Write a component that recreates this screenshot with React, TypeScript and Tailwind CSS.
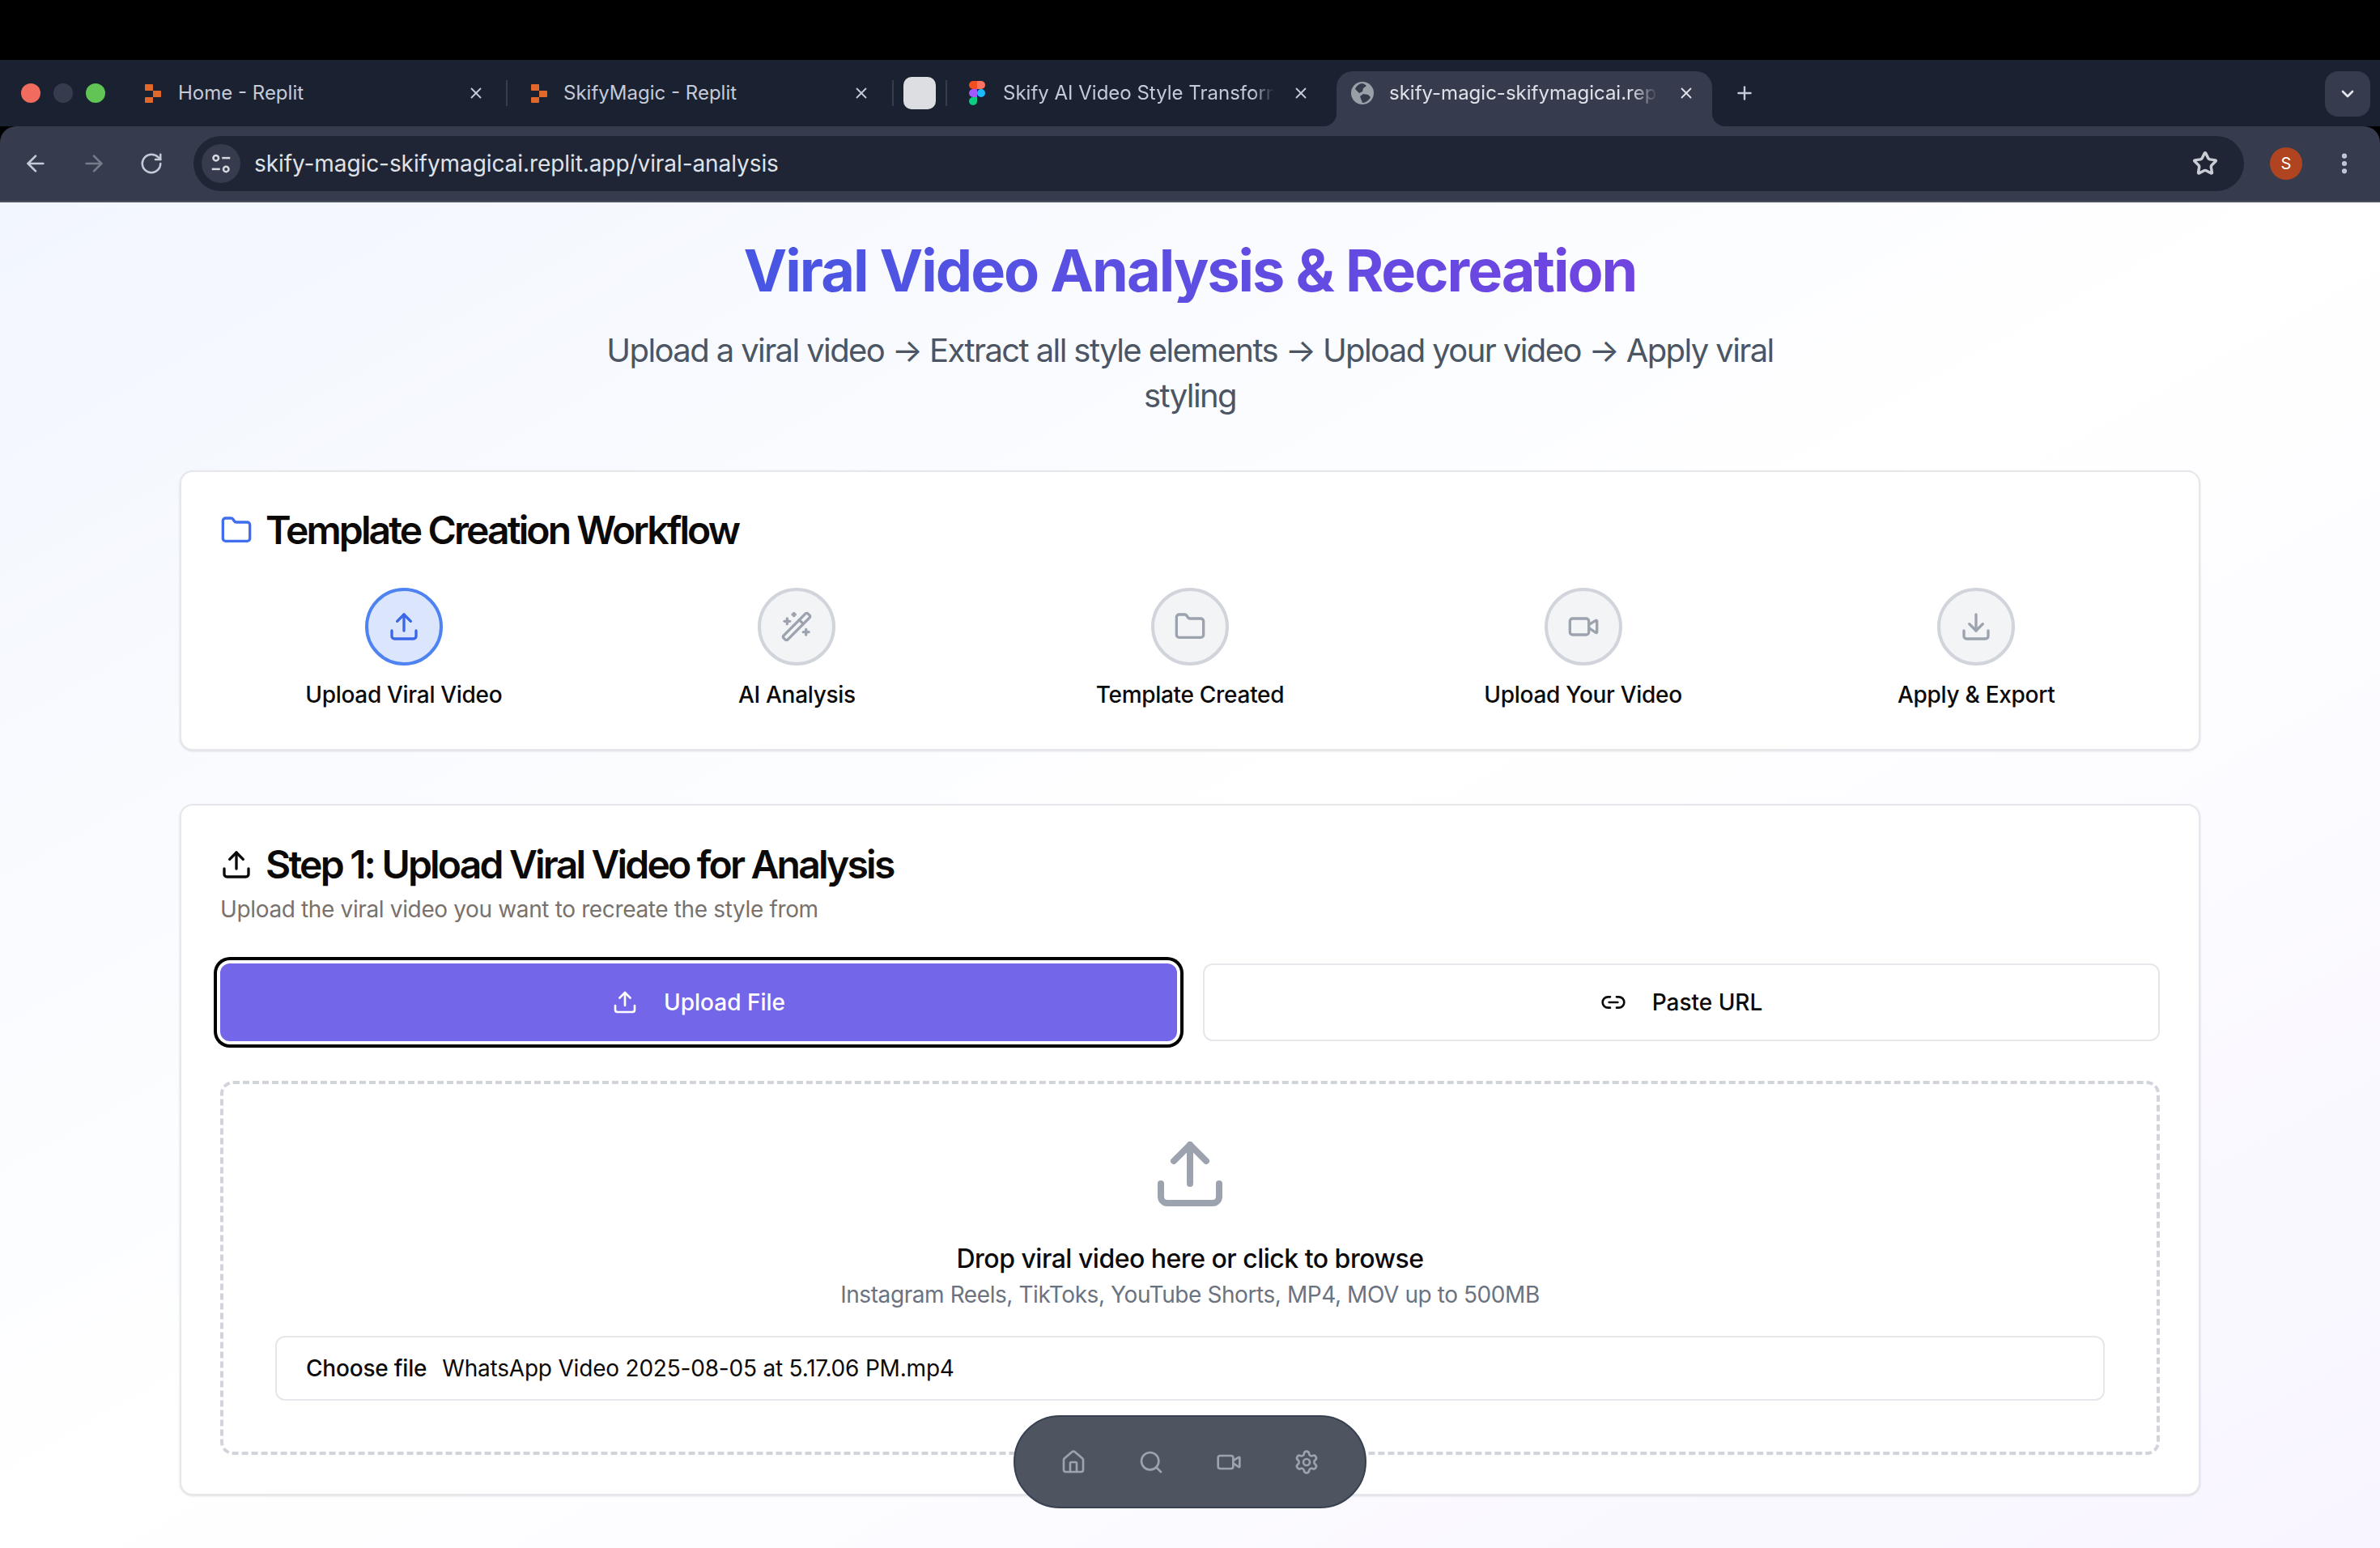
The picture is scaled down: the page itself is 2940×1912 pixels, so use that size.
import React from "react";
import { ArrowLeft, ArrowRight, RotateCw, Star, EllipsisVertical, ChevronDown, Plus, X, Folder, Upload, WandSparkles, Video, Download, Link2, House, Search, Settings } from "lucide-react";

const ReplitLogo = () => (
  <svg viewBox="0 0 20 23" className="w-[20px] h-[23px] shrink-0">
    <path d="M0 1a1 1 0 0 1 1-1h8a1 1 0 0 1 1 1v7H1a1 1 0 0 1-1-1Z" fill="#e2682a" />
    <path d="M10 8h9a1 1 0 0 1 1 1v6a1 1 0 0 1-1 1h-9Z" fill="#e2682a" />
    <path d="M1 16h9v6a1 1 0 0 1-1 1H1a1 1 0 0 1-1-1v-5a1 1 0 0 1 1-1Z" fill="#e2682a" />
  </svg>
);

const FigmaLogo = () => (
  <svg viewBox="0 0 20 30" className="w-[20px] h-[30px] shrink-0">
    <path d="M0 5a5 5 0 0 1 5-5h5v10H5a5 5 0 0 1-5-5Z" fill="#f24e1e" />
    <path d="M10 0h5a5 5 0 0 1 0 10h-5Z" fill="#ff7262" />
    <path d="M0 15a5 5 0 0 1 5-5h5v10H5a5 5 0 0 1-5-5Z" fill="#a259ff" />
    <circle cx="15" cy="15" r="5" fill="#1abcfe" />
    <path d="M0 25a5 5 0 0 1 5-5h5v5a5 5 0 0 1-10 0Z" fill="#0acf83" />
  </svg>
);

const GlobeIcon = () => (
  <svg viewBox="0 0 28 28" className="w-[28px] h-[28px] shrink-0">
    <circle cx="14" cy="14" r="14" fill="#9aa0a8" />
    <path d="M13 2c-4 1-7 4-8 7l5 5 4-2 1-4 4-3c-2-2-4-3-6-3ZM15 15l-4 3 3 8c4 0 8-3 10-7l-3-3Z" fill="#353b4b" />
  </svg>
);

const TuneIcon = () => (
  <svg viewBox="0 0 24 24" className="w-[30px] h-[30px]" fill="none" stroke="#d5d8df" strokeWidth="2">
    <circle cx="7" cy="6.5" r="2.6" />
    <path d="M13 6.5h8" />
    <path d="M3 17.5h8" />
    <circle cx="17" cy="17.5" r="2.6" />
  </svg>
);

function Tab({ width, icon, title, fade, closeGap, textGap }: { width: string; icon: React.ReactNode; title: string; fade?: boolean; closeGap: string; textGap: string }) {
  return (
    <div className={`flex items-center h-[54px] shrink-0 ${width}`}>
      {icon}
      <span className={`flex-1 min-w-0 overflow-hidden whitespace-nowrap text-[24px] text-[#c5cad8] ${textGap} ${fade ? "[mask-image:linear-gradient(to_right,black_92%,transparent)]" : ""}`}>{title}</span>
      <X className={`w-[22px] h-[22px] text-[#c5cad8] shrink-0 ${closeGap}`} strokeWidth={2} />
    </div>
  );
}

const Sep = () => <div className="w-[2px] h-[32px] bg-[#363c4d] shrink-0" />;

const steps = [
  { label: "Upload Viral Video", Icon: Upload, active: true },
  { label: "AI Analysis", Icon: WandSparkles },
  { label: "Template Created", Icon: Folder },
  { label: "Upload Your Video", Icon: Video },
  { label: "Apply & Export", Icon: Download },
];

export default function App() {
  return (
    <div className="relative w-[2940px] h-[1912px] overflow-hidden flex flex-col bg-black font-['Inter',sans-serif]">
      <div className="h-[74px] bg-black shrink-0" />
      <div className="h-[82px] bg-[#1a2130] shrink-0 flex pl-[26px] items-start pt-[14px]">
        <div className="flex gap-4 items-center h-[54px] shrink-0">
          <div className="w-[24px] h-[24px] rounded-full bg-[#f26b5f]" />
          <div className="w-[24px] h-[24px] rounded-full bg-[#363c4d]" />
          <div className="w-[24px] h-[24px] rounded-full bg-[#60c554]" />
        </div>
        <div className="ml-[49px] flex items-center h-[54px]">
          <Tab width="w-[446px]" icon={<ReplitLogo />} title="Home - Replit" textGap="ml-[21px]" closeGap="mr-[26px]" />
          <Sep />
          <div className="w-[29px]" />
          <Tab width="w-[446px]" icon={<ReplitLogo />} title="SkifyMagic - Replit" textGap="ml-[20px]" closeGap="mr-[27px]" />
          <Sep />
          <div className="w-[12px]" />
          <div className="w-[40px] h-[40px] rounded-[10px] bg-[#dcdee2] shrink-0" />
          <div className="w-[12px]" />
          <Sep />
          <div className="w-[27px]" />
          <Tab width="w-[454px]" icon={<FigmaLogo />} title="Skify AI Video Style Transformer" fade textGap="ml-[22px]" closeGap="ml-[22px] mr-[33px]" />
        </div>
        <div className="relative h-[68px] w-[464px] shrink-0 rounded-t-[20px] bg-[#363c4d] flex items-start pl-[18px] pr-[21px]">
          <div className="absolute -left-[16px] bottom-0 w-[16px] h-[16px] bg-[#363c4d]"><div className="w-full h-full bg-[#1a2130] rounded-br-[16px]" /></div>
          <div className="absolute -right-[16px] bottom-0 w-[16px] h-[16px] bg-[#363c4d]"><div className="w-full h-full bg-[#1a2130] rounded-bl-[16px]" /></div>
          <div className="flex items-center h-[54px] w-full">
            <GlobeIcon />
            <span className="ml-[19px] flex-1 min-w-0 overflow-hidden whitespace-nowrap text-[24px] text-[#dfe2e8] [mask-image:linear-gradient(to_right,black_90%,transparent)]">skify-magic-skifymagicai.replit.app</span>
            <X className="ml-[24px] w-[22px] h-[22px] text-[#dfe2e8] shrink-0" strokeWidth={2} />
          </div>
        </div>
        <Plus className="ml-[27px] mt-[14px] w-[26px] h-[26px] text-[#c5cad8] shrink-0" strokeWidth={2.2} />
        <div className="flex-1" />
        <div className="mr-[12px] w-[56px] h-[56px] rounded-[16px] bg-[#363c4d] flex items-center justify-center shrink-0">
          <ChevronDown className="w-[24px] h-[24px] text-[#e5e7ec]" strokeWidth={2.6} />
        </div>
      </div>
      <div className="h-[94px] shrink-0 bg-[#363c4d] rounded-t-[20px] border-b-2 border-[#4a4f5c] flex items-center">
        <ArrowLeft className="ml-[28px] w-[32px] h-[32px] text-[#c5cad8] shrink-0" strokeWidth={2} />
        <ArrowRight className="ml-[40px] w-[32px] h-[32px] text-[#757b8a] shrink-0" strokeWidth={2} />
        <RotateCw className="ml-[40px] w-[30px] h-[30px] text-[#c5cad8] shrink-0" strokeWidth={2} />
        <div className="ml-[37px] h-[68px] flex-1 rounded-full bg-[#1f2534] flex items-center pl-[10px] pr-[32px]">
          <div className="w-[48px] h-[48px] rounded-full bg-[#363c4d] flex items-center justify-center shrink-0"><TuneIcon /></div>
          <span className="ml-[17px] flex-1 text-[28px] tracking-[-0.08px] text-[#dfe2e8] whitespace-nowrap">skify-magic-skifymagicai.replit.app/viral-analysis</span>
          <Star className="w-[32px] h-[32px] text-[#c9ccd3] shrink-0" strokeWidth={2.6} />
        </div>
        <div className="ml-[32px] w-[40px] h-[40px] rounded-full bg-[#b04420] flex items-center justify-center text-[20px] text-white shrink-0">S</div>
        <EllipsisVertical className="ml-[36px] mr-[28px] w-[32px] h-[32px] text-[#c5cad8] shrink-0" strokeWidth={2.6} />
      </div>

      <div className="flex-1 min-h-0 bg-gradient-to-br from-[#f2f6fe] via-white to-[#f8f5ff]">
        <div className="w-[2496px] mx-auto">
          <div className="pt-[44px] flex flex-col items-center">
            <h1 className="text-[72px] leading-[80px] font-bold tracking-[-2px] bg-gradient-to-r from-[#4756e3] to-[#7044e0] bg-clip-text text-transparent">Viral Video Analysis &amp; Recreation</h1>
            <p className="mt-[31px] w-[1536px] text-center text-[40px] leading-[56px] tracking-[-1.6px] text-[#4b5563]">Upload a viral video → Extract all style elements → Upload your video → Apply viral styling</p>
          </div>

          <section className="mt-[64px] h-[346px] rounded-[16px] border-2 border-[#e5e7eb] bg-white shadow-sm px-[48px] pt-[40px]">
            <div className="flex items-center gap-[16px] h-[64px]">
              <Folder className="w-[40px] h-[40px] text-[#3f6fee] shrink-0" strokeWidth={2} />
              <h2 className="text-[48px] leading-[64px] font-semibold tracking-[-2.9px] text-[#0c0a09]">Template Creation Workflow</h2>
            </div>
            <div className="mt-[39px] grid grid-cols-5 gap-8">
              {steps.map(({ label, Icon, active }) => (
                <div key={label} className="flex flex-col items-center">
                  <div className={`w-[96px] h-[96px] rounded-full border-4 flex items-center justify-center ${active ? "border-[#4f83f1] bg-[#dbe6fd] text-[#3a67e8]" : "border-[#d1d5db] bg-[#f3f4f6] text-[#9ca3af]"}`}>
                    <Icon className="w-[40px] h-[40px]" strokeWidth={2} />
                  </div>
                  <div className="mt-[16px] text-[28px] leading-[40px] font-medium tracking-[-0.3px] text-[#0c0a09]">{label}</div>
                </div>
              ))}
            </div>
          </section>

          <section className="mt-[66px] h-[854px] rounded-[16px] border-2 border-[#e5e7eb] bg-white shadow-sm px-[48px] pt-[41px]">
            <div className="flex items-center gap-[16px] h-[64px]">
              <Upload className="w-[40px] h-[40px] text-[#0c0a09] shrink-0" strokeWidth={2} />
              <h2 className="text-[48px] leading-[64px] font-semibold tracking-[-2.8px] text-[#0c0a09]">Step 1: Upload Viral Video for Analysis</h2>
            </div>
            <p className="mt-[3px] text-[28px] leading-[40px] tracking-[-0.36px] text-[#78716c]">Upload the viral video you want to recreate the style from</p>
            <div className="mt-[47px] grid grid-cols-2 gap-8">
              <div className="h-[96px] rounded-[12px] bg-[#7366e9] ring-4 ring-black ring-offset-4 ring-offset-white flex items-center justify-center gap-[32px] text-white text-[28px] font-medium">
                <Upload className="w-[32px] h-[32px]" strokeWidth={2} />
                Upload File
              </div>
              <div className="h-[96px] rounded-[12px] border-2 border-[#e5e7eb] bg-white flex items-center justify-center gap-[32px] text-[#0c0a09] text-[28px] font-medium">
                <Link2 className="w-[32px] h-[32px]" strokeWidth={2} />
                Paste URL
              </div>
            </div>
            <div className="mt-[49px] h-[462px] rounded-[16px] border-4 border-dashed border-[#d1d5db] pt-[59px] px-[64px] flex flex-col items-center">
              <Upload className="mt-[4px] w-[96px] h-[96px] text-[#9ca3af] shrink-0" strokeWidth={2} />
              <div className="mt-[33px] text-[32px] leading-[48px] font-medium tracking-[-0.5px] text-[#0c0a09]">Drop viral video here or click to browse</div>
              <div className="text-[28px] leading-[40px] tracking-[-0.42px] text-[#6b7280]">Instagram Reels, TikToks, YouTube Shorts, MP4, MOV up to 500MB</div>
              <div className="mt-[31px] w-full h-[80px] rounded-[12px] border-2 border-[#e5e7eb] bg-white flex items-center pl-[36px] text-[28px] text-[#0c0a09] shrink-0">
                <span className="font-medium tracking-[-0.2px]">Choose file</span>
                <span className="ml-[19px] tracking-[-0.2px]">WhatsApp Video 2025-08-05 at 5.17.06 PM.mp4</span>
              </div>
            </div>
          </section>
        </div>
      </div>

      <div className="fixed left-[1252px] top-[1748px] w-[436px] h-[115px] rounded-full bg-[#4f5560] border-2 border-[#374151] flex items-center justify-center gap-[64px] text-[#9ca3af]">
        <House className="w-[32px] h-[32px]" strokeWidth={2} />
        <Search className="w-[32px] h-[32px]" strokeWidth={2} />
        <Video className="w-[32px] h-[32px]" strokeWidth={2} />
        <Settings className="w-[32px] h-[32px]" strokeWidth={2} />
      </div>
    </div>
  );
}
